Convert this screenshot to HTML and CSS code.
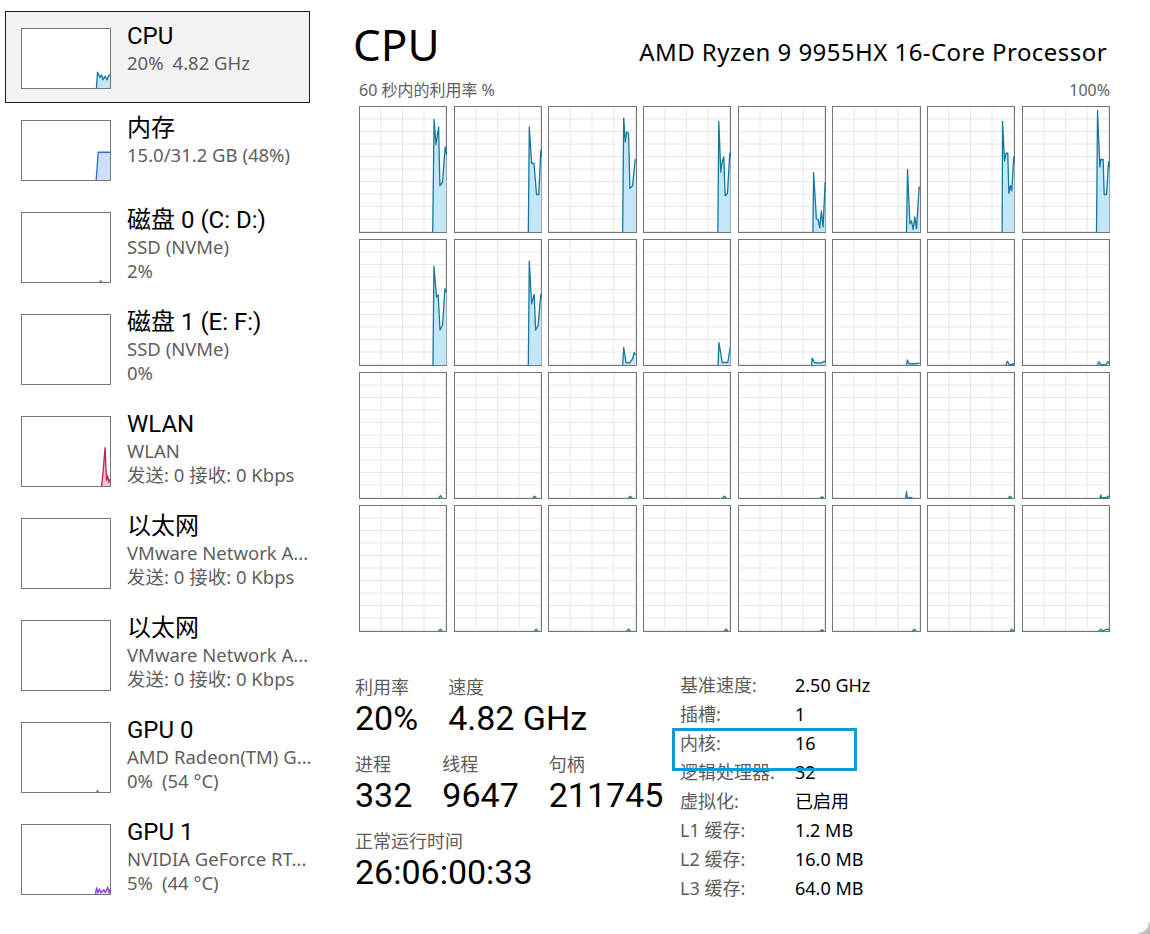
FILE: index.html
```html
<!DOCTYPE html>
<html lang="zh-CN">
<head>
<meta charset="utf-8">
<title>任务管理器 - 性能</title>
<link rel="stylesheet" href="styles.css">
</head>
<body>
<div class="window">
  <nav class="sidebar">
    <div class="item short selected">
      <div class="thumb"><svg viewBox="0 0 100 100" preserveAspectRatio="none"><polygon class="cpu-area" points="84.6,100 85.8,73 88.4,82 90.5,78 92,86 94.5,80 96.5,86 99,78 100,80 100,100"/><polyline class="cpu-line" points="84.6,100 85.8,73 88.4,82 90.5,78 92,86 94.5,80 96.5,86 99,78 100,80"/></svg></div>
      <div class="item-text">
        <div class="item-title">CPU</div>
        <div class="item-sub">20%<span class="gap">4.82 GHz</span></div>
      </div>
    </div>
    <div class="item short">
      <div class="thumb"><svg viewBox="0 0 100 100" preserveAspectRatio="none"><polygon class="mem-area" points="84.3,100 86.6,53 100,53 100,100"/><polyline class="mem-line" points="84.3,100 86.6,53 100,53"/></svg></div>
      <div class="item-text">
        <div class="item-title">内存</div>
        <div class="item-sub">15.0/31.2 GB (48%)</div>
      </div>
    </div>
    <div class="item">
      <div class="thumb"><svg viewBox="0 0 100 100" preserveAspectRatio="none"><polyline class="disk-line" points="88,100 89.5,98.5 91,100"/></svg></div>
      <div class="item-text">
        <div class="item-title">磁盘 0 (C: D:)</div>
        <div class="item-sub">SSD (NVMe)</div>
        <div class="item-sub">2%</div>
      </div>
    </div>
    <div class="item">
      <div class="thumb"></div>
      <div class="item-text">
        <div class="item-title">磁盘 1 (E: F:)</div>
        <div class="item-sub">SSD (NVMe)</div>
        <div class="item-sub">0%</div>
      </div>
    </div>
    <div class="item">
      <div class="thumb"><svg viewBox="0 0 100 100" preserveAspectRatio="none"><polygon class="net-area" points="90.5,100 92,82 94.4,44 95.2,70 96,92 97.4,86 98.9,94 100,90 100,100"/><polyline class="net-line" points="90.5,100 92,82 94.4,44 95.2,70 96,92 97.4,86 98.9,94 100,90"/></svg></div>
      <div class="item-text">
        <div class="item-title">WLAN</div>
        <div class="item-sub">WLAN</div>
        <div class="item-sub">发送: 0 接收: 0 Kbps</div>
      </div>
    </div>
    <div class="item">
      <div class="thumb"></div>
      <div class="item-text">
        <div class="item-title">以太网</div>
        <div class="item-sub">VMware Network A...</div>
        <div class="item-sub">发送: 0 接收: 0 Kbps</div>
      </div>
    </div>
    <div class="item">
      <div class="thumb"></div>
      <div class="item-text">
        <div class="item-title">以太网</div>
        <div class="item-sub">VMware Network A...</div>
        <div class="item-sub">发送: 0 接收: 0 Kbps</div>
      </div>
    </div>
    <div class="item">
      <div class="thumb"><svg viewBox="0 0 100 100" preserveAspectRatio="none"><polyline class="gpu-line" points="85,100 85.8,98 86.6,100"/></svg></div>
      <div class="item-text">
        <div class="item-title">GPU 0</div>
        <div class="item-sub">AMD Radeon(TM) G...</div>
        <div class="item-sub">0%<span class="gap">(54 °C)</span></div>
      </div>
    </div>
    <div class="item">
      <div class="thumb"><svg viewBox="0 0 100 100" preserveAspectRatio="none"><polygon class="gpu-area" points="83.6,100 84.7,90.5 86.2,97.6 88,93 89.9,98 92.9,94 94.8,97.6 97.4,90.5 98.9,97.6 100,93 100,100"/><polyline class="gpu-line" points="83.6,100 84.7,90.5 86.2,97.6 88,93 89.9,98 92.9,94 94.8,97.6 97.4,90.5 98.9,97.6 100,93"/></svg></div>
      <div class="item-text">
        <div class="item-title">GPU 1</div>
        <div class="item-sub">NVIDIA GeForce RT...</div>
        <div class="item-sub">5%<span class="gap">(44 °C)</span></div>
      </div>
    </div>
  </nav>

  <main class="main">
    <header class="header">
      <div class="title">CPU</div>
      <div class="model">AMD Ryzen 9 9955HX 16-Core Processor</div>
    </header>
    <div class="graph-label">
      <span>60 秒内的利用率 %</span>
      <span>100%</span>
    </div>
    <div class="grid">
      <!-- row 1 -->
      <div class="cell"><svg viewBox="0 0 100 100" preserveAspectRatio="none"><polygon class="area" points="84.1,100 85.7,10 87.8,30 90.9,16 92.4,63 95.5,60 98.5,32 100,38 100,100"/><polyline class="line" points="84.1,100 85.7,10 87.8,30 90.9,16 92.4,63 95.5,60 98.5,32 100,38"/></svg></div>
      <div class="cell"><svg viewBox="0 0 100 100" preserveAspectRatio="none"><polygon class="area" points="84.8,100 85.9,16 88.6,45 91.3,45 94.3,70 96.9,70 99.2,35 100,40 100,100"/><polyline class="line" points="84.8,100 85.9,16 88.6,45 91.3,45 94.3,70 96.9,70 99.2,35 100,40"/></svg></div>
      <div class="cell"><svg viewBox="0 0 100 100" preserveAspectRatio="none"><polygon class="area" points="85.2,100 86.4,9 88.3,28 89.8,20 92,21 93.6,65 96.6,63 99.7,42 100,42 100,100"/><polyline class="line" points="85.2,100 86.4,9 88.3,28 89.8,20 92,21 93.6,65 96.6,63 99.7,42 100,42"/></svg></div>
      <div class="cell"><svg viewBox="0 0 100 100" preserveAspectRatio="none"><polygon class="area" points="85.4,100 86.5,11.5 88.8,52 90.4,44 92.3,40 93.8,71 96.5,69 99.2,37 100,40 100,100"/><polyline class="line" points="85.4,100 86.5,11.5 88.8,52 90.4,44 92.3,40 93.8,71 96.5,69 99.2,37 100,40"/></svg></div>
      <div class="cell"><svg viewBox="0 0 100 100" preserveAspectRatio="none"><polygon class="area" points="85.5,100 86.3,52.5 89.5,89.3 91.4,90 93.4,96.5 95.3,83 97.3,96 99.6,60.5 100,62 100,100"/><polyline class="line" points="85.5,100 86.3,52.5 89.5,89.3 91.4,90 93.4,96.5 95.3,83 97.3,96 99.6,60.5 100,62"/></svg></div>
      <div class="cell"><svg viewBox="0 0 100 100" preserveAspectRatio="none"><polygon class="area" points="85,100 86.2,50 88.9,93.3 90.8,91 92.7,98 94.6,88 96.6,97.3 99.6,64 100,66 100,100"/><polyline class="line" points="85,100 86.2,50 88.9,93.3 90.8,91 92.7,98 94.6,88 96.6,97.3 99.6,64 100,66"/></svg></div>
      <div class="cell"><svg viewBox="0 0 100 100" preserveAspectRatio="none"><polygon class="area" points="85.8,100 86.2,11.5 88.5,43 90.4,37 92.3,37 93.5,69 95.4,63 96.9,67 99.2,40 100,45 100,100"/><polyline class="line" points="85.8,100 86.2,11.5 88.5,43 90.4,37 92.3,37 93.5,69 95.4,63 96.9,67 99.2,40 100,45"/></svg></div>
      <div class="cell"><svg viewBox="0 0 100 100" preserveAspectRatio="none"><polygon class="area" points="85,100 86.2,3 88.9,48 90,42 92.7,42 93.9,70 96.6,70 98.9,44 100,48 100,100"/><polyline class="line" points="85,100 86.2,3 88.9,48 90,42 92.7,42 93.9,70 96.6,70 98.9,44 100,48"/></svg></div>
      <!-- row 2 -->
      <div class="cell"><svg viewBox="0 0 100 100" preserveAspectRatio="none"><polygon class="area" points="84.4,100 85.5,21 88.6,45.6 90.5,44 92.5,72 95.5,68 98.2,39 100,42 100,100"/><polyline class="line" points="84.4,100 85.5,21 88.6,45.6 90.5,44 92.5,72 95.5,68 98.2,39 100,42"/></svg></div>
      <div class="cell"><svg viewBox="0 0 100 100" preserveAspectRatio="none"><polygon class="area" points="84.8,100 85.9,17 88.6,51 91.6,43.5 93.2,72 96.1,68.5 99.2,44 100,46 100,100"/><polyline class="line" points="84.8,100 85.9,17 88.6,51 91.6,43.5 93.2,72 96.1,68.5 99.2,44 100,46"/></svg></div>
      <div class="cell"><svg viewBox="0 0 100 100" preserveAspectRatio="none"><polygon class="area" points="85.2,100 86.4,86 89.1,98 92.9,98.5 96.7,95 98.6,90 100,92 100,100"/><polyline class="line" points="85.2,100 86.4,86 89.1,98 92.9,98.5 96.7,95 98.6,90 100,92"/></svg></div>
      <div class="cell"><svg viewBox="0 0 100 100" preserveAspectRatio="none"><polygon class="area" points="85.6,100 86.7,82 90.5,98 96.9,98 99.6,86.5 100,87 100,100"/><polyline class="line" points="85.6,100 86.7,82 90.5,98 96.9,98 99.6,86.5 100,87"/></svg></div>
      <div class="cell"><svg viewBox="0 0 100 100" preserveAspectRatio="none"><polygon class="area" points="84,100 84.6,94.5 87.3,98 95,98.5 98.5,97 100,98 100,100"/><polyline class="line" points="84,100 84.6,94.5 87.3,98 95,98.5 98.5,97 100,98"/></svg></div>
      <div class="cell"><svg viewBox="0 0 100 100" preserveAspectRatio="none"><polygon class="area" points="85,100 86,96 88,99 94,99 100,98.5 100,100"/><polyline class="line" points="85,100 86,96 88,99 94,99 100,98.5"/></svg></div>
      <div class="cell"><svg viewBox="0 0 100 100" preserveAspectRatio="none"><polyline class="line" points="90,100 92,97 94,100 100,99"/></svg></div>
      <div class="cell"><svg viewBox="0 0 100 100" preserveAspectRatio="none"><polyline class="line" points="86,100 88,97.5 90,100 96,99.5 98,97.5 100,99"/></svg></div>
      <!-- row 3 -->
      <div class="cell"><svg viewBox="0 0 100 100" preserveAspectRatio="none"><polyline class="line" points="91,100 93,98 95,100"/></svg></div>
      <div class="cell"><svg viewBox="0 0 100 100" preserveAspectRatio="none"><polyline class="line" points="90,100 92,98.5 94,100"/></svg></div>
      <div class="cell"><svg viewBox="0 0 100 100" preserveAspectRatio="none"><polyline class="line" points="92,100 94,98.5 96,100"/></svg></div>
      <div class="cell"><svg viewBox="0 0 100 100" preserveAspectRatio="none"><polyline class="line" points="91,100 93,98.5 95,100"/></svg></div>
      <div class="cell"><svg viewBox="0 0 100 100" preserveAspectRatio="none"><polyline class="line" points="94,100 96,99 98,100"/></svg></div>
      <div class="cell"><svg viewBox="0 0 100 100" preserveAspectRatio="none"><polyline class="line" points="84,100 85,95 86,100 90,99.5 92,100"/></svg></div>
      <div class="cell"><svg viewBox="0 0 100 100" preserveAspectRatio="none"><polyline class="line" points="93,100 95,98.5 97,100"/></svg></div>
      <div class="cell"><svg viewBox="0 0 100 100" preserveAspectRatio="none"><polyline class="line" points="89,100 90,97.5 91,100 97,99.5 99,98.5 100,99"/></svg></div>
      <!-- row 4 -->
      <div class="cell"><svg viewBox="0 0 100 100" preserveAspectRatio="none"><polyline class="line" points="91,100 93,98.5 95,100"/></svg></div>
      <div class="cell"><svg viewBox="0 0 100 100" preserveAspectRatio="none"><polyline class="line" points="92,100 94,98.5 96,100"/></svg></div>
      <div class="cell"><svg viewBox="0 0 100 100" preserveAspectRatio="none"><polyline class="line" points="90,100 92,98.5 94,100"/></svg></div>
      <div class="cell"><svg viewBox="0 0 100 100" preserveAspectRatio="none"><polyline class="line" points="93,100 95,98.5 97,100"/></svg></div>
      <div class="cell"><svg viewBox="0 0 100 100" preserveAspectRatio="none"><polyline class="line" points="94,100 96,99 98,100"/></svg></div>
      <div class="cell"><svg viewBox="0 0 100 100" preserveAspectRatio="none"><polyline class="line" points="92,100 94,98.5 96,100"/></svg></div>
      <div class="cell"><svg viewBox="0 0 100 100" preserveAspectRatio="none"><polyline class="line" points="95,100 97,98.5 99,100"/></svg></div>
      <div class="cell"><svg viewBox="0 0 100 100" preserveAspectRatio="none"><polyline class="line" points="88,100 90,98.5 92,100 95,99 97,98.5 99,99 100,98.5"/></svg></div>
    </div>

    <section class="stats">
      <div class="stats-left">
        <div class="stat-row">
          <div class="stat"><div class="stat-label">利用率</div><div class="stat-value">20%</div></div>
          <div class="stat"><div class="stat-label">速度</div><div class="stat-value">4.82 GHz</div></div>
        </div>
        <div class="stat-row">
          <div class="stat"><div class="stat-label">进程</div><div class="stat-value">332</div></div>
          <div class="stat"><div class="stat-label">线程</div><div class="stat-value">9647</div></div>
          <div class="stat"><div class="stat-label">句柄</div><div class="stat-value">211745</div></div>
        </div>
        <div class="stat-row">
          <div class="stat"><div class="stat-label">正常运行时间</div><div class="stat-value">26:06:00:33</div></div>
        </div>
      </div>
      <div class="info">
        <div class="info-row"><span class="info-label">基准速度:</span><span class="info-value">2.50 GHz</span></div>
        <div class="info-row"><span class="info-label">插槽:</span><span class="info-value">1</span></div>
        <div class="info-row highlight"><span class="info-label">内核:</span><span class="info-value">16</span></div>
        <div class="info-row"><span class="info-label">逻辑处理器:</span><span class="info-value">32</span></div>
        <div class="info-row"><span class="info-label">虚拟化:</span><span class="info-value">已启用</span></div>
        <div class="info-row"><span class="info-label">L1 缓存:</span><span class="info-value">1.2 MB</span></div>
        <div class="info-row"><span class="info-label">L2 缓存:</span><span class="info-value">16.0 MB</span></div>
        <div class="info-row"><span class="info-label">L3 缓存:</span><span class="info-value">64.0 MB</span></div>
      </div>
    </section>
  </main>
</div>
</body>
</html>
```

FILE: styles.css
```css
* {
  box-sizing: border-box;
}

html,
body {
  margin: 0;
  padding: 0;
  background: #ffffff;
}

body {
  font-family: "Noto Sans", "Noto Sans CJK SC", sans-serif;
  color: #000000;
  overflow: hidden;
}

body::after {
  content: "";
  position: fixed;
  right: 0;
  bottom: 0;
  width: 12px;
  height: 12px;
  background: radial-gradient(circle at 0 0, rgba(255, 255, 255, 0) 10px, #bdbdbd 12px);
}

.window {
  display: flex;
  height: 934px;
}

/* ---------- sidebar ---------- */
.sidebar {
  flex: none;
  width: 355px;
  padding: 11px 0 0 5px;
}

.item {
  display: flex;
  align-items: flex-start;
  width: 305px;
  height: 102px;
  padding: 10px 0 0 15px;
  border: 1px solid transparent;
}

.item.short {
  height: 92px;
}

.item.selected {
  background: #f3f3f3;
  border-color: #1c1c1c;
}

.thumb {
  flex: none;
  width: 90px;
  height: 71px;
  margin-top: 6px;
  border: 1px solid #777777;
  background: #ffffff;
}

.item.short .thumb {
  height: 61px;
}

.thumb svg,
.cell svg {
  display: block;
  width: 100%;
  height: 100%;
  overflow: visible;
}

.item-text {
  margin-left: 16px;
  white-space: nowrap;
}

.item-title {
  font-family: Roboto, "Noto Sans CJK SC", sans-serif;
  font-size: 24px;
  line-height: 28.5px;
  color: #000000;
}

.item-sub {
  font-size: 18.5px;
  line-height: 24.5px;
  color: #5f5f5f;
}

.gap {
  margin-left: 9px;
}

/* graph colours */
.cpu-area,
.area {
  fill: #c3e7f6;
  stroke: none;
}

.cpu-line,
.line {
  fill: none;
  stroke: #17789e;
  stroke-width: 1.3;
  stroke-linejoin: round;
  vector-effect: non-scaling-stroke;
}

.mem-area {
  fill: #cddffa;
  stroke: none;
}

.mem-line {
  fill: none;
  stroke: #2f6ad6;
  stroke-width: 1.3;
  vector-effect: non-scaling-stroke;
}

.disk-line {
  fill: none;
  stroke: #4f9a20;
  stroke-width: 1.5;
  vector-effect: non-scaling-stroke;
}

.net-area {
  fill: #f2c3d3;
  stroke: none;
}

.net-line {
  fill: none;
  stroke: #c41f58;
  stroke-width: 1.3;
  vector-effect: non-scaling-stroke;
}

.gpu-area {
  fill: #e6d5fb;
  stroke: none;
}

.gpu-line {
  fill: none;
  stroke: #8a3ee8;
  stroke-width: 1.3;
  vector-effect: non-scaling-stroke;
}

/* ---------- main panel ---------- */
.main {
  flex: none;
  width: 755px;
  padding-top: 18px;
}

.header {
  display: flex;
  justify-content: space-between;
  align-items: baseline;
  height: 52px;
  padding-right: 3px;
}

.title {
  font-size: 44px;
  line-height: 52px;
  margin-left: -2px;
}

.model {
  font-size: 24px;
  letter-spacing: 0.44px;
}

.graph-label {
  display: flex;
  justify-content: space-between;
  margin: 10px 0 0 4px;
  font-size: 16px;
  line-height: 20px;
  color: #616161;
}

.grid {
  display: grid;
  width: 751px;
  margin: 6px 0 0 4px;
  grid-template-columns: repeat(8, 1fr);
  grid-template-rows: repeat(4, 127px);
  column-gap: 6.2px;
  row-gap: 6px;
}

.cell {
  border: 1px solid #767676;
  background-color: #ffffff;
  background-image:
    linear-gradient(to left, #e8e8e8 1px, rgba(232, 232, 232, 0) 1px),
    linear-gradient(to top, #e8e8e8 1px, rgba(232, 232, 232, 0) 1px);
  background-size: 25% 100%, 100% 10%;
  background-clip: padding-box;
}

/* ---------- stats ---------- */
.stats {
  display: flex;
  margin-top: 39px;
}

.stats-left {
  flex: none;
  width: 325px;
  padding-top: 5.5px;
}

.stat-row {
  display: flex;
  column-gap: 30px;
}

.stat-row + .stat-row {
  margin-top: 17px;
}

.stat-label {
  font-family: "Liberation Sans", "Noto Sans CJK SC", sans-serif;
  font-size: 18px;
  line-height: 22px;
  color: #5c5c5c;
}

.stat-value {
  font-family: Roboto, "Noto Sans", sans-serif;
  font-size: 34px;
  line-height: 38px;
  color: #000000;
  white-space: nowrap;
}

.info {
  font-size: 18px;
  line-height: 29px;
}

.info-row {
  display: flex;
}

.info-label {
  flex: none;
  width: 115px;
  color: #5c5c5c;
}

.info-value {
  color: #000000;
}

.info-row.highlight {
  position: relative;
}

.info-row.highlight::after {
  content: "";
  position: absolute;
  top: -1px;
  left: -8px;
  width: 179px;
  height: 37px;
  border: 3px solid #1598d8;
}
```
